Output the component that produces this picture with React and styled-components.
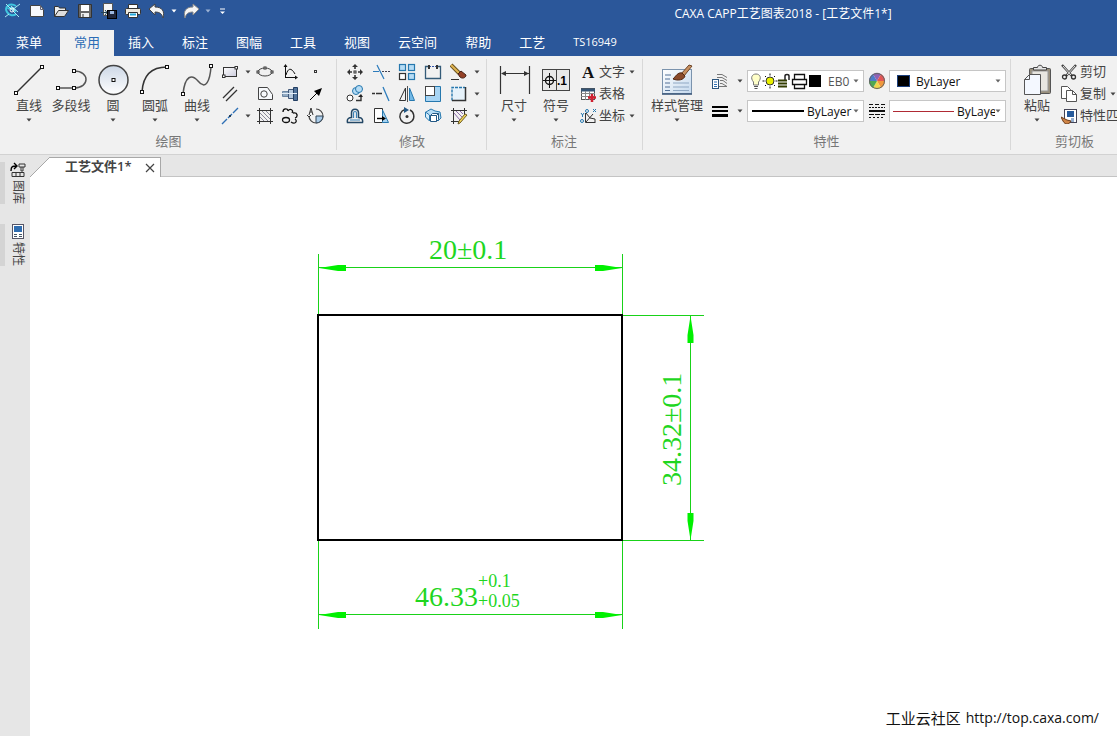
import React from "react";
import styled, { createGlobalStyle, css } from "styled-components";

const GlobalStyle = createGlobalStyle`
  *, *::before, *::after { box-sizing: border-box; }
  body {
    margin: 0;
    font-family: "Open Sans", "Noto Sans CJK SC", sans-serif;
    font-size: 13px;
    color: #444;
    background: #fff;
  }
  svg { display: block; flex: none; }
  button, select { font: inherit; color: inherit; }
`;

/* ---------- layout ---------- */

const Shell = styled.div`
  display: flex;
  flex-direction: column;
  min-height: 100vh;
  overflow: hidden;
`;

const Header = styled.header`
  background: #2b579a;
  color: #fff;
`;

const TitleBar = styled.div`
  display: flex;
  height: 30px;
`;

const QuickBar = styled.div`
  display: flex;
  align-items: center;
  gap: 4px;
  height: 22px;
`;

const PlainButton = styled.button`
  display: flex;
  align-items: center;
  justify-content: center;
  padding: 0;
  border: 0;
  background: none;
  white-space: nowrap;
`;

const QuickButton = styled(PlainButton)`
  width: ${(p) => p.$width ?? 20}px;
  height: 20px;
`;

const Title = styled.h1`
  flex: 1;
  margin: 0;
  padding-left: 220px;
  font-size: 12px;
  font-weight: 400;
  line-height: 28px;
  text-align: center;
  white-space: nowrap;
`;

const TabRow = styled.nav`
  display: flex;
  height: 26px;
  padding-left: 2px;
`;

const RibbonTab = styled(PlainButton)`
  padding: 0 14px 4px;
  ${(p) => p.$menu && css`margin-right: 4px;`}
  ${(p) => p.$latin && css`font-size: 11px;`}
  ${(p) =>
    p.$active &&
    css`
      background: #f1f1f1;
      color: #2b6cb5;
    `}
`;

const Ribbon = styled.div`
  display: flex;
  height: 99px;
  overflow: hidden;
  background: #f1f1f1;
  border-bottom: 1px solid #d2d2d2;
`;

const Group = styled.section`
  flex: none;
  display: flex;
  flex-direction: column;
  padding: 0 ${(p) => p.$right ?? 5}px 0 ${(p) => p.$left ?? 5}px;
  position: relative;
  &::after {
    content: "";
    position: absolute;
    right: 0;
    top: 3px;
    bottom: 4px;
    border-right: 1px solid #d8d8d8;
  }
`;

const GroupBody = styled.div`
  display: flex;
  height: 74px;
`;

const GroupName = styled.h2`
  margin: 0;
  font-size: 13px;
  font-weight: 400;
  line-height: 22px;
  color: #777;
  text-align: center;
`;

const LargeButton = styled(PlainButton)`
  flex-direction: column;
  justify-content: flex-start;
  width: ${(p) => p.$width ?? 42}px;
  padding-top: 7px;
  line-height: 17px;
`;

const ArrowSlot = styled.span`
  display: flex;
  height: 12px;
  align-items: center;
`;

const ToolGrid = styled.div`
  display: grid;
  grid-template-columns: ${(p) => p.$columns};
  grid-auto-rows: 22px;
  padding-top: 5px;
`;

const RowList = styled.div`
  display: flex;
  flex-direction: column;
  padding: 5px 0 0 3px;
`;

const RowButton = styled(PlainButton)`
  justify-content: flex-start;
  gap: 3px;
  height: 22px;
`;

const RowText = styled.span`
  line-height: 18px;
  padding: 0 1px 3px 0;
`;

const PropertyRows = styled.div`
  display: grid;
  grid-template-columns: 26px 14px 117px 25px 117px;
  grid-template-rows: 22px 22px;
  row-gap: 8px;
  padding-top: 14px;
`;

const Combo = styled.label`
  display: flex;
  align-items: center;
  padding: 0 4px 0 3px;
  min-width: 0;
  border: 1px solid #c6c6c6;
  background: #fff;
  color: #111;
  font-size: 12px;
`;

const ComboSelect = styled.select`
  flex: 1;
  min-width: 0;
  width: 10px;
  padding: 0;
  margin-left: ${(p) => p.$gap ?? 3}px;
  border: 0;
  outline: 0;
  background: none;
  appearance: none;
  color: ${(p) => (p.$muted ? "#555" : "#111")};
`;

const Workspace = styled.div`
  flex: 1;
  display: flex;
`;

const Sidebar = styled.aside`
  flex: none;
  display: flex;
  flex-direction: column;
  gap: 20px;
  width: 30px;
  padding-top: 7px;
  background: #e6e6e6;
`;

const SideTab = styled(PlainButton)`
  flex-direction: column;
  justify-content: flex-start;
  gap: 2px;
  height: 42px;
  border-left: 5px solid #d4d4d4;
  font-size: 12px;
`;

const SideText = styled.span`
  writing-mode: vertical-rl;
  text-orientation: sideways;
  line-height: 16px;
`;

const Main = styled.main`
  flex: 1;
  min-width: 0;
  display: flex;
  flex-direction: column;
  position: relative;
`;

const DocStrip = styled.div`
  display: flex;
  align-items: flex-end;
  height: 22px;
  background: #e6e6e6;
`;

const DocTab = styled.div`
  display: flex;
  align-items: center;
  height: 20px;
  background: #fff;
  border-top: 1px solid #a8a8a8;
  border-right: 1px solid #a8a8a8;
  padding: 0 4px 0 15px;
  gap: 12px;
  font-weight: 600;
`;

const DocName = styled.span`
  line-height: 16px;
  padding-bottom: 3px;
`;

const DocRest = styled.div`
  flex: 1;
  border-bottom: 1px solid #c4c4c4;
`;

const Canvas = styled.svg`
  flex: 1;
  width: 100%;
  min-height: 480px;
`;

const DimText = styled.text`
  font-family: "Liberation Serif", serif;
  font-size: ${(p) => (p.$small ? 18 : 28)}px;
  fill: #1fd61f;
`;

const SiteNote = styled.p`
  position: absolute;
  right: 18px;
  bottom: 6px;
  margin: 0;
  font-size: 14px;
  line-height: 24px;
  color: #111;
  display: flex;
  gap: 5px;
`;

const SiteName = styled.span`
  font-size: 15px;
`;

const SiteLink = styled.a`
  color: inherit;
  text-decoration: none;
`;

/* ---------- icons ---------- */

const Icon = ({ w = 18, h = 18, children }) => (
  <svg width={w} height={h} viewBox={`0 0 ${w} ${h}`} fill="none" stroke="#333" strokeWidth="1" aria-hidden="true">
    {children}
  </svg>
);

const Arrow = ({ color = "#444" }) => (
  <Icon w={6} h={4}>
    <path d="M0.5 0.5h5L3 3.5z" fill={color} stroke="none" />
  </Icon>
);

const Knob = ({ x, y }) => <rect x={x - 1.5} y={y - 1.5} width="3" height="3" fill="#fff" stroke="#111" />;

const big = {
  line: (
    <Icon w={34} h={34}>
      <path d="M4 30L30 4" strokeWidth="1.5" /><Knob x={4} y={30} /><Knob x={30} y={4} />
    </Icon>
  ),
  polyline: (
    <Icon w={34} h={34}>
      <path d="M4 25H20C36 25 36 8 20 8" strokeWidth="1.5" stroke="#555" />
      <Knob x={4} y={25} /><Knob x={20} y={25} /><Knob x={20} y={8} />
    </Icon>
  ),
  circle: (
    <Icon w={34} h={34}>
      <defs>
        <linearGradient id="disc" x1="0" y1="0" x2="0" y2="1">
          <stop offset="0" stopColor="#ccd7e6" /><stop offset="1" stopColor="#fff" />
        </linearGradient>
      </defs>
      <circle cx="17.5" cy="17" r="14.5" fill="url(#disc)" strokeWidth="1.5" stroke="#444" /><Knob x={17.5} y={17} />
    </Icon>
  ),
  arc: (
    <Icon w={34} h={34}>
      <path d="M4 29C5 12 14 4 29 4" strokeWidth="1.5" /><Knob x={4} y={29} /><Knob x={29} y={4} />
    </Icon>
  ),
  curve: (
    <Icon w={34} h={34}>
      <path d="M3 31C5 12 12 11 18 18C26 28 30 17 31 4" strokeWidth="1.5" stroke="#555" />
      <Knob x={3} y={31} /><Knob x={31} y={3} />
    </Icon>
  ),
  dimension: (
    <Icon w={34} h={34}>
      <path d="M3.5 3v28M32.5 3v28M5 10.5h27" strokeWidth="1.2" />
      <path d="M4 10.5l5-2.5v5zM32 10.5l-5-2.5v5z" fill="#333" stroke="none" />
    </Icon>
  ),
  symbol: (
    <Icon w={34} h={34}>
      <rect x="3.5" y="6.5" width="27" height="21" fill="#e9e9e9" stroke="#444" />
      <path d="M17.5 6v22" stroke="#444" />
      <circle cx="10.5" cy="17.5" r="4" stroke="#111" strokeWidth="1.4" />
      <path d="M4 17.5h13M10.5 10v15" stroke="#111" />
      <text x="18" y="22" fill="#000" stroke="none" fontFamily="Liberation Sans, sans-serif" fontWeight="700" fontSize="12">.1</text>
    </Icon>
  ),
  style: (
    <Icon w={38} h={34}>
      <defs>
        <linearGradient id="sheet" x1="0" y1="0" x2="1" y2="1">
          <stop offset="0" stopColor="#fff" /><stop offset="1" stopColor="#c4d9ee" />
        </linearGradient>
      </defs>
      <rect x="4.5" y="6.5" width="29" height="24" fill="url(#sheet)" stroke="#7b93ad" />
      <path d="M4 31h30" stroke="#3f5b7c" strokeWidth="1.6" />
      <path d="M7 12h6M7 16h5M7 20h5M7 24h5M7 27.500h5" stroke="#527197" />
      <path d="M15 20h16M15 24h16M15 27.500h16" stroke="#8fa8c4" />
      <path d="M31 2l3 1-8 10-3-2z" fill="#c8905f" stroke="#6d4427" />
      <path d="M24 10c-4-1-6 3-9 6 5 2 11 1 12-3z" fill="#8a4b2b" stroke="#4f2612" />
    </Icon>
  ),
  paste: (
    <Icon w={34} h={34}>
      <rect x="9.5" y="5.500" width="21" height="25" rx="1" fill="#9a907c" stroke="#555" />
      <rect x="12" y="8" width="16" height="20" fill="#e8e6e0" stroke="#999" />
      <path d="M13.500 7V4.500h4c0-3 5-3 5 0h4V7z" fill="#e4e4e4" stroke="#444" />
      <path d="M4.500 16.500l5-5h11v20h-16z" fill="#f4f8ff" stroke="#555" /><path d="M4.500 16.500h5v-5" stroke="#555" />
    </Icon>
  ),
};

const small = {
  rect: <Icon><defs><linearGradient id="rg" x2="1" y2="1"><stop stopColor="#fff" /><stop offset="1" stopColor="#ccd" /></linearGradient></defs><rect x="2.5" y="4.5" width="13" height="9" fill="url(#rg)" /><rect x="1.5" y="12" width="2.5" height="2.5" fill="#fff" /><rect x="14" y="3.5" width="2.5" height="2.5" fill="#fff" /></Icon>,
  ellipse: <Icon><ellipse cx="9" cy="9" rx="7" ry="4" stroke="#444" /><g fill="#fff"><rect x="8" y="4" width="2" height="2" /><rect x="1" y="8" width="2" height="2" /><rect x="15" y="8" width="2" height="2" /></g></Icon>,
  graph: <Icon><path d="M4.5 3v12M4 14.5h12M5 12C7 5 10 4 14 11" stroke="#111" /><path d="M4.5 1l-2 3h4zM17 14.5l-3-2v4z" fill="#111" stroke="none" /></Icon>,
  point: <Icon><rect x="7.5" y="7.5" width="2" height="2" /></Icon>,
  parallel: <Icon><path d="M2 13L13 2M5 16L16 5" strokeWidth="1.3" /></Icon>,
  contour: <Icon><path d="M2.5 2.5h9l5 7v5h-14z" stroke="#444" fill="#f7f9fc" /><circle cx="8" cy="9" r="3.2" stroke="#444" /></Icon>,
  shaft: <Icon><path d="M1.500 6.500h6v5h-6z" fill="#93abc3" stroke="#6c86a2" /><path d="M7.500 4.500h5v9h-5z" fill="#b4c8dd" stroke="#42597a" /><path d="M12.500 2.500h4v13h-4z" fill="#51739b" stroke="#223e62" /><path d="M1 8.500h15" stroke="#e4eef8" /></Icon>,
  pointer: <Icon><path d="M3 15L12 6" stroke="#000" /><path d="M15 3l-3 8-5-5z" fill="#000" stroke="none" /></Icon>,
  axis: <Icon><path d="M1 17L6 12M7 11l4-4M12 6l5-5" stroke="#2d6fb5" strokeWidth="1.4" /><circle cx="9" cy="9" r="1" fill="#123" stroke="none" /></Icon>,
  hatch: <Icon><path d="M3.5 1v16M14.5 1v16M1 3.5h16M1 14.5h16" /><path d="M4 6l8 8M4 10l4 4M6 4l8 8M10 4l4 4" stroke="#889" /></Icon>,
  cloud: <Icon><path d="M2 5c0-4 5-4 5-1M7 4c2-3 6-1 4 2M12 6c5-1 5 4 2 5M14 12c3 2 0 6-4 3" stroke="#111" strokeWidth="1.3" /><ellipse cx="5" cy="13" rx="3.5" ry="2.5" stroke="#111" strokeWidth="1.3" /></Icon>,
  detail: <Icon><path d="M9 2a7 7 0 1 1-7 7" stroke="#444" strokeWidth="1.2" /><path d="M9 9h7a7 7 0 0 1-7 7z" fill="#a9cbe8" stroke="#345" /><path d="M2 8l2-7 2 7M3 5h2M0 8l2 2 2-2" /></Icon>,
  move: <Icon><path d="M9 3v3M9 12v3M3 9h3M12 9h3" strokeWidth="1.6" /><path d="M9 1l-3 3h6zM9 17l-3-3h6zM1 9l3-3v6zM17 9l-3-3v6z" fill="#333" stroke="none" /><rect x="8" y="8" width="2" height="2" fill="#fff" /></Icon>,
  trim: <Icon><path d="M1 8.500h6M5 2l7 14" stroke="#2d7cbc" strokeWidth="1.2" /><path d="M10 8.500h8" strokeDasharray="2 1" stroke="#445" /></Icon>,
  array: <Icon><g strokeWidth="1.2"><rect x="1.5" y="1.5" width="6" height="6" fill="#b6dcf5" stroke="#2678ae" /><rect x="10.5" y="1.5" width="6" height="6" fill="#b6dcf5" stroke="#2678ae" /><rect x="10.5" y="10.5" width="6" height="6" fill="#b6dcf5" stroke="#2678ae" /><rect x="1.5" y="10.5" width="6" height="6" fill="#fff" /></g></Icon>,
  breakIt: <Icon><path d="M5 3.500H1.500v12h15v-12H13" stroke="#345b78" strokeWidth="1.3" /><path d="M5 3.500h8" stroke="#35a" strokeDasharray="2 1" /><path d="M5 2v4M13 2v4" strokeWidth="2" /></Icon>,
  erase: <Icon><path d="M1 2L9 10" stroke="#6b5320" strokeWidth="4" /><path d="M1 2L9 10" stroke="#e0b552" strokeWidth="2" /><path d="M8 11l3-3 5 4c0 3-4 4-6 2z" fill="#944127" stroke="#442114" /><path d="M1 16.500h8" /></Icon>,
  copy: <Icon><circle cx="10" cy="6" r="3.5" fill="#b6dcf5" stroke="#2678ae" /><circle cx="13" cy="4" r="3.5" fill="#b6dcf5" stroke="#2678ae" /><circle cx="4" cy="13" r="3" fill="#fff" /><path d="M10 15.500h5v-4" strokeWidth="1.4" /><path d="M15 9l-3 3h5z" fill="#222" stroke="none" /></Icon>,
  extend: <Icon><path d="M0 8.500h3M4 8.500h6" strokeWidth="1.3" /><path d="M11 2l6 14" stroke="#2d7cbc" strokeWidth="1.3" /></Icon>,
  mirror: <Icon><path d="M7.500 3v12.500H1.500z" /><path d="M11.500 3v12.500h5z" fill="#72b9e7" stroke="#2678ae" /><path d="M9.500 1v16" stroke="#555" /></Icon>,
  scale: <Icon><path d="M1.500 1.500h15v15h-15z" fill="#a7d4f3" stroke="#2678ae" /><rect x="1.500" y="1.500" width="9" height="9" fill="#fff" stroke="#444" /></Icon>,
  stretch: <Icon><rect x="2.500" y="2.500" width="13" height="13" fill="#e6f2fa" stroke="none" /><path d="M2 15.500V2.500h13" stroke="#2678ae" strokeWidth="1.4" strokeDasharray="3 1" /><path d="M2 15.500h13.500V2" strokeWidth="1.5" /></Icon>,
  offset: <Icon><path d="M1.500 15.500h15c1-5-3-5-4-5V6c0-5-7-5-7 0v4.500c-2 0-5 1-4 5z" strokeWidth="1.5" stroke="#234765" /><path d="M4 13h10M7.500 11V6c0-2 3-2 3 0v5" stroke="#3c83b7" strokeWidth="1.2" /></Icon>,
  slide: <Icon><path d="M2.500 1.500h8v14h-8z" fill="#fff" /><path d="M10.500 3l6 12.500h-6z" fill="#a7d4f3" stroke="#2678ae" /><path d="M5 11.500h7" stroke="#000" strokeWidth="1.4" /><path d="M10 9l4 2.500-4 2.500z" fill="#000" stroke="none" /></Icon>,
  rotate: <Icon><path d="M7 2.500a7 7 0 1 0 5 .5" strokeWidth="1.4" /><path d="M6 0l5 3-5 3z" fill="#245985" stroke="none" /><circle cx="9" cy="9.500" r="1.500" fill="#333" stroke="none" /></Icon>,
  block: <Icon><path d="M2 5l5-3 4 2 5 1 1 6-3 3" stroke="#2678ae" fill="#b6dcf5" /><path d="M1.500 5v5l4 4V8z" fill="#d6ecfa" stroke="#2678ae" /><path d="M6.500 8.500l2-2h6v6l-2 2h-6z" fill="#fff" stroke="#245985" /><path d="M6.500 8.500h6v6M12.500 8.500l2-2" stroke="#245985" /></Icon>,
  edit: <Icon><path d="M3.500 1v16M1 3.500h16M14.500 1v7M1 14.500h9" /><path d="M4 6l6 7M6 4l6 6M10 4l3 3" stroke="#8b6aa9" /><path d="M17 8l-7 8-2 1 1-3 6-7z" fill="#f4d75a" stroke="#6c5a22" /></Icon>,
  text: <Icon w={16} h={22}><text x="2" y="17" fontFamily="Liberation Serif, serif" fontWeight="700" fontSize="17" fill="#111" stroke="none">A</text></Icon>,
  table: <Icon w={16} h={16}><rect x="1.5" y="2.5" width="13" height="11" fill="#fff" stroke="#555" /><path d="M1 4h14" strokeWidth="3" stroke="#355474" /><path d="M1 7.500h14M1 10.500h14M5.500 5v9M9.500 5v9" stroke="#888" /><path d="M8 11.500h8M12 8v8" stroke="#d02030" strokeWidth="2.5" /></Icon>,
  coordinate: <Icon w={16} h={16}><path d="M5.500 5v9.500H15M6 14l7-8M6 5l4 5 5 1v4" /><path d="M13 1l3 3M16 1l-3 3M1 5l1.500 2L4 5M2.500 7v2" stroke="#2678ae" /><circle cx="7" cy="3" r="1.5" stroke="#2678ae" /><circle cx="2" cy="13" r="1.5" stroke="#2678ae" /></Icon>,
  cut: <Icon w={16} h={16}><path d="M1 1l10 11M15 1L5 12" stroke="#444" strokeWidth="2.4" /><path d="M2 2l8 9M14 2l-8 9" stroke="#e4e4e4" /><circle cx="3.500" cy="13" r="2" strokeWidth="1.3" /><circle cx="12.500" cy="13" r="2" strokeWidth="1.3" /></Icon>,
  duplicate: <Icon w={16} h={16}><path d="M.5 .5h6l3 3v9h-9z" fill="#fff" stroke="#555" /><path d="M5.500 4.500h6l4 4v7h-10z" fill="#fff" stroke="#555" /><path d="M11.500 4.500v4h4" stroke="#555" /></Icon>,
  match: <Icon w={16} h={16}><rect x="3.500" y="1.500" width="12" height="13" fill="#fff" stroke="#445" /><rect x="6" y="3" width="7" height="6" fill="#255a9c" stroke="none" /><path d="M10 11h3M10 13h3" stroke="#255a9c" /><path d="M0 9l6 3 4 1c-2 4-6 4-8 0z" fill="#cf8547" stroke="#6b3b18" /></Icon>,
  layers: <Icon><path d="M6 2.500h5l5 3M6 5.500h5l5 3M9 8.500h3l4 3M9 11.500h2l5 3M8 14.500h8" stroke="#777" /><rect x="1.500" y="7.500" width="6" height="9" fill="#fff" stroke="#2d557d" /><path d="M3 10h3M3 12.500h3M3 14.500h3" stroke="#2d6fb5" /></Icon>,
  weights: <Icon><path d="M1 5h16" strokeWidth="2" stroke="#000" /><path d="M1 9h16" strokeWidth="2" stroke="#000" /><path d="M1 13.500h16" strokeWidth="3" stroke="#000" /></Icon>,
  dashes: <Icon><g stroke="#111"><path d="M1 2.500h16" strokeDasharray="4 2" /><path d="M1 5.500h16" strokeDasharray="2 1" /><path d="M1 9h16" strokeWidth="2" /><path d="M1 12.500h16" strokeDasharray="5 1" /><path d="M1 15.500h16" strokeDasharray="2 2" /></g></Icon>,
  wheel: <Icon><g stroke="none"><path d="M9 9L1 9a8 8 0 0 1 4-7z" fill="#4d7cc9" /><path d="M9 9L5 2a8 8 0 0 1 8 0z" fill="#8e62b5" /><path d="M9 9l4-7a8 8 0 0 1 4 7z" fill="#e25656" /><path d="M9 9h8a8 8 0 0 1-4 7z" fill="#f0983c" /><path d="M9 9l4 7a8 8 0 0 1-8 0z" fill="#f0d64c" /><path d="M9 9l-4 7a8 8 0 0 1-4-7z" fill="#4fa852" /></g><circle cx="9" cy="9" r="7.5" stroke="#666" /></Icon>,
};

const layerState = (
  <Icon w={74} h={18}>
    <path d="M2.500 10C-1 6 1 2 5 2s6 4 2.500 8v3h-5z" fill="#ffffc8" stroke="#777" />
    <path d="M3 14.500h4M3.500 16.500h3" stroke="#555" />
    <circle cx="19" cy="9" r="4" fill="#e9f000" stroke="#333" />
    <path d="M19 1.500v2M19 14.500v2M11.500 9h2M24.500 9h2M14 4l1 1M23 13l1 1M14 14l1-1M23 5l1-1" stroke="#111" />
    <path d="M27 8.500h9M27 11.500h9M27 14.500h9" stroke="#333d00" strokeWidth="2" />
    <path d="M34 8V4c0-2 4-2 4 0v4" stroke="#222" strokeWidth="1.5" />
    <path d="M43.500 7V2.500h10V7M41.500 7.500h14v5h-14zM43.500 12.500v4h10v-4z" fill="#fff" stroke="#111" strokeWidth="1.3" />
    <rect x="58" y="3" width="12" height="12" fill="#000" stroke="none" />
  </Icon>
);

const quick = {
  logo: <Icon><path d="M13 4C7 0 1 5 4 10c2 4 7 4 9 2M5 7c3-3 8 0 7 3" stroke="#3fc6e0" strokeWidth="2" /><path d="M3 2l13 13M9 8l8-6M8 4l7 6M2 15l4-3" stroke="#a6ecf4" /><circle cx="9" cy="8" r="2" stroke="#fff" /></Icon>,
  fresh: <Icon><path d="M2.5 3.500h10l3 4v7h-13z" fill="#f7f9fc" stroke="#444" /><path d="M12.500 3.500v4h3" stroke="#667" /></Icon>,
  open: <Icon><path d="M2.500 14.500v-10h4l1 1.500h6v3" fill="#eee" stroke="#333" /><path d="M2.500 14.500l4-6h10l-4 6z" fill="#ddd" stroke="#333" /></Icon>,
  save: <Icon><path d="M2.500 2.500h13v13h-13z" fill="#666" stroke="#333" /><path d="M5 3h8v6H5z" fill="#fff" stroke="none" /><path d="M5 11h8v4H5z" fill="#eee" stroke="none" /><path d="M7 12v3" /></Icon>,
  saveAs: <Icon><path d="M3.500 1.500h9v12h-9z" fill="#f7f7f7" stroke="#555" /><path d="M1 10.500h6M5 8l2 2.500L5 13" stroke="#245" /><rect x="7.500" y="8.500" width="9" height="8" fill="#20263a" stroke="#000" /><path d="M10 9h4v3h-4z" fill="#9db8df" stroke="none" /></Icon>,
  print: <Icon><path d="M4.500 6V2.500h9V6" fill="#fff" /><rect x="1.500" y="6.500" width="15" height="6" rx="1" fill="#eee9df" /><path d="M4.500 10.500h9v5h-9z" fill="#fff" /><path d="M6 12.500h6" stroke="#23a7d9" strokeWidth="2" /></Icon>,
  undo: <Icon><path d="M1 7l6-5v3c7 0 10 4 8 11-1-4-3-6-8-6v3z" fill="#f5f5f5" stroke="#444" /></Icon>,
  redo: <Icon><path d="M17 7l-6-5v3C4 5 1 9 3 16c1-4 3-6 8-6v3z" fill="#f5f5f5" stroke="#888" /></Icon>,
  more: <Icon w={7} h={7}><path d="M1 1h5" stroke="#fff" /><path d="M1 3.500h5L3.500 6z" fill="#fff" stroke="none" /></Icon>,
};

/* ---------- parts ---------- */

const Tool = ({ label, icon }) => <PlainButton aria-label={label}>{icon}</PlainButton>;
const More = () => <PlainButton aria-label="更多"><Arrow /></PlainButton>;

const Large = ({ label, icon, width }) => (
  <LargeButton $width={width}>
    {icon}
    {label}
    <ArrowSlot>{label !== "多段线" && <Arrow />}</ArrowSlot>
  </LargeButton>
);

const Row = ({ label, icon, more }) => (
  <RowButton>
    {icon}
    <RowText>{label}</RowText>
    {more && <Arrow />}
  </RowButton>
);

const ComboBox = ({ label, lead, value, gap, muted }) => (
  <Combo>
    {lead}
    <ComboSelect aria-label={label} $gap={gap} $muted={muted} defaultValue={value}>
      <option>{value}</option>
    </ComboSelect>
    <Arrow color="#666" />
  </Combo>
);

const tabs = ["菜单", "常用", "插入", "标注", "图幅", "工具", "视图", "云空间", "帮助", "工艺", "TS16949"];

const GREEN = "#19d219";

/* Arrowhead with its tip at (x, y), turned by `turn` degrees. */
const Head = ({ x, y, turn }) => (
  <path
    d="M0 0L-19 -3H-27V3H-19Z"
    transform={`translate(${x} ${y}) rotate(${turn})`}
    fill="#00f000"
    stroke="none"
  />
);

const Drawing = () => (
  <Canvas fill="none" role="img" aria-label="尺寸标注">
    <g stroke={GREEN}>
      <path d="M288.5 77V138M592.5 77V138M288.5 363V452M592.5 363V452" />
      <path d="M288 90.5H593M288 437.5H593" />
      <path d="M592 138.5H674M592 363.5H674M660.5 138V363" />
    </g>
    <rect x="288" y="138" width="304" height="225" stroke="#000" strokeWidth="2" />
    <Head x={289} y={91} turn={180} />
    <Head x={592} y={91} turn={0} />
    <Head x={289} y={438} turn={180} />
    <Head x={592} y={438} turn={0} />
    <Head x={660.5} y={139} turn={-90} />
    <Head x={660.5} y={363} turn={90} />
    <DimText x="399" y="82">20±0.1</DimText>
    <DimText x="385" y="429">46.33</DimText>
    <DimText $small x="448" y="410">+0.1</DimText>
    <DimText $small x="448" y="430">+0.05</DimText>
    <DimText transform="translate(651 309) rotate(-90)">34.32±0.1</DimText>
  </Canvas>
);

export default function App() {
  return (
    <Shell>
      <GlobalStyle />
      <Header>
        <TitleBar>
          <QuickBar>
            <QuickButton $width={23} aria-label="CAXA">{quick.logo}</QuickButton>
            <QuickButton aria-label="新建">{quick.fresh}</QuickButton>
            <QuickButton aria-label="打开">{quick.open}</QuickButton>
            <QuickButton aria-label="保存">{quick.save}</QuickButton>
            <QuickButton aria-label="另存为">{quick.saveAs}</QuickButton>
            <QuickButton aria-label="打印">{quick.print}</QuickButton>
            <QuickButton aria-label="撤销">{quick.undo}</QuickButton>
            <QuickButton $width={6} aria-label="撤销列表"><Arrow color="#fff" /></QuickButton>
            <QuickButton aria-label="恢复">{quick.redo}</QuickButton>
            <QuickButton $width={6} aria-label="恢复列表"><Arrow color="#9db3d4" /></QuickButton>
            <QuickButton $width={14} aria-label="自定义">{quick.more}</QuickButton>
          </QuickBar>
          <Title>CAXA CAPP工艺图表2018 - [工艺文件1*]</Title>
        </TitleBar>
        <TabRow>
          {tabs.map((t) => (
            <RibbonTab key={t} $menu={t === "菜单"} $active={t === "常用"} $latin={t === "TS16949"}>{t}</RibbonTab>
          ))}
        </TabRow>
      </Header>

      <Ribbon>
        <Group $left={8} $right={8}>
          <GroupBody>
            <Large label="直线" icon={big.line} />
            <Large label="多段线" icon={big.polyline} />
            <Large label="圆" icon={big.circle} />
            <Large label="圆弧" icon={big.arc} />
            <Large label="曲线" icon={big.curve} />
            <ToolGrid $columns="24px 11px 24px 26px 26px">
              <Tool label="矩形" icon={small.rect} />
              <More />
              <Tool label="椭圆" icon={small.ellipse} />
              <Tool label="公式曲线" icon={small.graph} />
              <Tool label="点" icon={small.point} />
              <Tool label="平行线" icon={small.parallel} />
              <span />
              <Tool label="局部放大" icon={small.contour} />
              <Tool label="孔轴" icon={small.shaft} />
              <Tool label="箭头" icon={small.pointer} />
              <Tool label="中心线" icon={small.axis} />
              <More />
              <Tool label="剖面线" icon={small.hatch} />
              <Tool label="云线" icon={small.cloud} />
              <Tool label="局部视图" icon={small.detail} />
            </ToolGrid>
          </GroupBody>
          <GroupName>绘图</GroupName>
        </Group>

        <Group>
          <GroupBody>
            <ToolGrid $columns="26px 26px 26px 26px 26px 10px">
              <Tool label="平移" icon={small.move} />
              <Tool label="裁剪" icon={small.trim} />
              <Tool label="阵列" icon={small.array} />
              <Tool label="打断" icon={small.breakIt} />
              <Tool label="删除" icon={small.erase} />
              <More />
              <Tool label="平移复制" icon={small.copy} />
              <Tool label="延伸" icon={small.extend} />
              <Tool label="镜像" icon={small.mirror} />
              <Tool label="缩放" icon={small.scale} />
              <Tool label="拉伸" icon={small.stretch} />
              <More />
              <Tool label="等距线" icon={small.offset} />
              <Tool label="过渡" icon={small.slide} />
              <Tool label="旋转" icon={small.rotate} />
              <Tool label="分解" icon={small.block} />
              <Tool label="编辑剖面线" icon={small.edit} />
              <More />
            </ToolGrid>
          </GroupBody>
          <GroupName>修改</GroupName>
        </Group>

        <Group $left={6} $right={8}>
          <GroupBody>
            <Large label="尺寸" icon={big.dimension} />
            <Large label="符号" icon={big.symbol} />
            <RowList>
              <Row label="文字" icon={small.text} more />
              <Row label="表格" icon={small.table} />
              <Row label="坐标" icon={small.coordinate} more />
            </RowList>
          </GroupBody>
          <GroupName>标注</GroupName>
        </Group>

        <Group $left={4}>
          <GroupBody>
            <Large label="样式管理" icon={big.style} width={60} />
            <PropertyRows>
              <Tool label="图层" icon={small.layers} />
              <More />
              <ComboBox label="当前图层" lead={layerState} value="EB0" muted />
              <Tool label="颜色" icon={small.wheel} />
              <ComboBox
                label="当前颜色"
                lead={<Icon w={20} h={14}><rect x="4.5" y="1.5" width="12" height="11" fill="#000" stroke="#1c3f7c" /></Icon>}
                value="ByLayer"
              />
              <Tool label="线宽" icon={small.weights} />
              <More />
              <ComboBox
                label="当前线宽"
                lead={<Icon w={53} h={4}><path d="M1 2h52" stroke="#000" strokeWidth="2" /></Icon>}
                value="ByLayer"
              />
              <Tool label="线型" icon={small.dashes} />
              <ComboBox
                label="当前线型"
                lead={<Icon w={61} h={3}><path d="M0 1.5h61" stroke="#b02a34" /></Icon>}
                value="ByLayer"
              />
            </PropertyRows>
          </GroupBody>
          <GroupName>特性</GroupName>
        </Group>

        <Group>
          <GroupBody>
            <Large label="粘贴" icon={big.paste} />
            <RowList>
              <Row label="剪切" icon={small.cut} />
              <Row label="复制" icon={small.duplicate} more />
              <Row label="特性匹配" icon={small.match} />
            </RowList>
          </GroupBody>
          <GroupName>剪切板</GroupName>
        </Group>
      </Ribbon>

      <Workspace>
        <Sidebar>
          <SideTab>
            <Icon w={16} h={16}>
              <path d="M1 9c0-5 2-5 5-5M4 1l3 3-3 3" stroke="#000" strokeWidth="1.4" />
              <path d="M9 2h6v3H9zM11 5v4h2V5M2 10.5h12v4H2zM6 10v5M10 10v5" stroke="#333" />
            </Icon>
            <SideText>图库</SideText>
          </SideTab>
          <SideTab>
            <Icon w={16} h={16}>
              <rect x="2.5" y="0.5" width="11" height="14" fill="#fff" stroke="#556" />
              <rect x="4" y="2" width="8" height="6" fill="#2f6db0" stroke="none" />
              <path d="M4 10.5h3M9 10.5h3M4 12.5h3M9 12.5h3" stroke="#456" />
            </Icon>
            <SideText>特性</SideText>
          </SideTab>
        </Sidebar>
        <Main>
          <DocStrip>
            <Icon w={20} h={20}>
              <path d="M0 20L20 0V20z" fill="#fff" stroke="none" />
              <path d="M0 20L20 0" stroke="#a8a8a8" />
            </Icon>
            <DocTab>
              <DocName>工艺文件1*</DocName>
              <PlainButton aria-label="关闭">
                <Icon w={12} h={12}><path d="M2 2l8 8M10 2l-8 8" strokeWidth="1.2" stroke="#444" /></Icon>
              </PlainButton>
            </DocTab>
            <DocRest />
          </DocStrip>
          <Drawing />
          <SiteNote>
            <SiteName>工业云社区</SiteName>
            <SiteLink href="http://top.caxa.com/">http://top.caxa.com/</SiteLink>
          </SiteNote>
        </Main>
      </Workspace>
    </Shell>
  );
}
